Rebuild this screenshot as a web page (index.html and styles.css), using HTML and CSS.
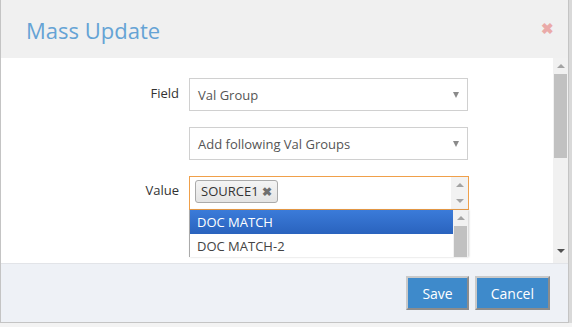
FILE: index.html
```html
<!DOCTYPE html>
<html lang="en">
<head>
    <meta charset="UTF-8">
    <title>Mass Update</title>
    <link rel="stylesheet" href="styles.css">
</head>
<body>
    <div class="modal">
        <div class="modal-header">
            <h1>Mass Update</h1>
            <span class="close">&#10006;</span>
        </div>

        <div class="modal-body">
            <div class="body-content">
                <div class="form-row">
                    <label>Field</label>
                    <div class="select">
                        <span>Val Group</span>
                        <span class="caret"></span>
                    </div>
                </div>

                <div class="form-row">
                    <label></label>
                    <div class="select">
                        <span>Add following Val Groups</span>
                        <span class="caret"></span>
                    </div>
                </div>

                <div class="form-row">
                    <label class="value-label">Value</label>
                    <div class="multi">
                        <div class="multi-box">
                            <span class="tag">SOURCE1 <b>&#10006;</b></span>
                            <div class="spin">
                                <span class="up"></span>
                                <span class="down"></span>
                            </div>
                        </div>
                        <div class="dropdown">
                            <ul>
                                <li class="active">DOC MATCH</li>
                                <li>DOC MATCH-2</li>
                            </ul>
                            <div class="dd-scroll">
                                <span class="up"></span>
                                <div class="dd-thumb"></div>
                            </div>
                        </div>
                    </div>
                </div>
            </div>

            <div class="scroll-col">
                <div class="scrollbar">
                    <span class="up"></span>
                    <div class="thumb"></div>
                    <div class="track"></div>
                    <span class="down dark"></span>
                </div>
            </div>
        </div>

        <div class="modal-footer">
            <button class="btn">Save</button>
            <button class="btn">Cancel</button>
        </div>
    </div>
    <div class="page-behind"></div>
</body>
</html>
```

FILE: styles.css
```css
body {
    margin: 0;
    font-family: "Open Sans", "Liberation Sans", sans-serif;
    background: #d9d9d9;
    width: 572px;
    height: 327px;
    overflow: hidden;
}
.modal {
    width: 567px;
    height: 322px;
    border: 1px solid #c4c4c4;
    border-top: none;
    background: #f0f0f0;
    display: flex;
    flex-direction: column;
}
.modal-header {
    height: 58px;
    display: flex;
    align-items: center;
    justify-content: space-between;
    padding: 0 14px 0 25px;
    box-sizing: border-box;
}
.modal-header h1 {
    margin: 0 0 -2px;
    font-size: 22px;
    font-weight: 400;
    color: #65a3d5;
}
.close {
    color: #eaaaa8;
    font-size: 15px;
    font-weight: bold;
    margin-top: -2px;
}
.modal-body {
    height: 205px;
    display: flex;
}
.body-content {
    flex: 1;
    background: #fff;
    padding-top: 20px;
    overflow: hidden;
}
.form-row {
    display: flex;
    margin-bottom: 16px;
}
.form-row label {
    width: 178px;
    padding-right: 10px;
    text-align: right;
    font-size: 13px;
    color: #333;
    line-height: 31px;
}
.form-row label.value-label {
    line-height: 29px;
}
.select {
    width: 279px;
    height: 33px;
    box-sizing: border-box;
    border: 1px solid #d0d0d0;
    display: flex;
    align-items: center;
    justify-content: space-between;
    padding: 0 8px 0 8px;
    font-size: 13px;
    color: #555;
}
.caret {
    width: 0;
    height: 0;
    border-left: 3px solid transparent;
    border-right: 3px solid transparent;
    border-top: 6px solid #8a8a8a;
    margin-top: 1px;
}
.multi {
    position: relative;
    width: 280px;
}
.multi-box {
    height: 34px;
    box-sizing: border-box;
    border: 1px solid #f0a04a;
    display: flex;
    align-items: flex-start;
    justify-content: space-between;
    padding: 3px 0 0 5px;
}
.tag {
    font-size: 13px;
    color: #333;
    border: 1px solid #aaa;
    border-radius: 3px;
    background: linear-gradient(#f4f4f4, #e4e4e4);
    padding: 1px 5px 1px 5px;
    line-height: 18px;
}
.tag b {
    color: #6f6f6f;
    font-size: 12px;
}
.spin {
    width: 17px;
    height: 32px;
    margin-top: -3px;
    background: #f2f2f2;
    display: flex;
    flex-direction: column;
    align-items: center;
    justify-content: space-around;
}
.up, .down {
    width: 0;
    height: 0;
    border-left: 4px solid transparent;
    border-right: 4px solid transparent;
}
.up {
    border-bottom: 4px solid #a3a3a3;
}
.down {
    border-top: 4px solid #a3a3a3;
}
.down.dark {
    border-top-color: #505050;
}
.dropdown {
    position: absolute;
    top: 34px;
    left: 0;
    width: 278px;
    height: 47px;
    overflow: hidden;
    background: #fff;
    border-left: 1px solid #aaa;
    box-shadow: 1px 0 2px rgba(0, 0, 0, 0.2);
    display: flex;
}
.dropdown ul {
    list-style: none;
    margin: 0;
    padding: 0;
    flex: 1;
}
.dropdown li {
    font-size: 13px;
    color: #444;
    padding: 0 7px;
    line-height: 24px;
}
.dropdown li.active {
    color: #fff;
    background: linear-gradient(#3b7bd9, #2a63be);
}
.dd-scroll {
    width: 15px;
    background: #f1f1f1;
    display: flex;
    flex-direction: column;
    align-items: center;
    padding-top: 6px;
    box-sizing: border-box;
}
.dd-thumb {
    width: 13px;
    height: 40px;
    margin-top: 6px;
    background: #c1c1c1;
}
.scroll-col {
    width: 15px;
    background: #f0f0f0;
}
.scrollbar {
    height: 199px;
    background: #f1f1f1;
    display: flex;
    flex-direction: column;
    align-items: center;
    padding: 6px 0 4px;
    box-sizing: border-box;
}
.thumb {
    width: 13px;
    height: 84px;
    margin-top: 6px;
    background: #c1c1c1;
}
.track {
    flex: 1;
}
.modal-footer {
    flex: 1;
    background: #eef1f6;
    border-top: 1px solid #e2e4e8;
    display: flex;
    justify-content: flex-end;
    gap: 6px;
    padding: 12px 18px 0 0;
    box-sizing: border-box;
}
.btn {
    height: 34px;
    padding: 0 14px;
    font-family: "Open Sans", "Liberation Sans", sans-serif;
    font-size: 14px;
    color: #fff;
    background: #3e8acb;
    border: 2px solid;
    border-color: #c9c9c9 #8c8c8c #8c8c8c #c9c9c9;
}
.page-behind {
    height: 5px;
    background: #f3f3f3;
}
```
